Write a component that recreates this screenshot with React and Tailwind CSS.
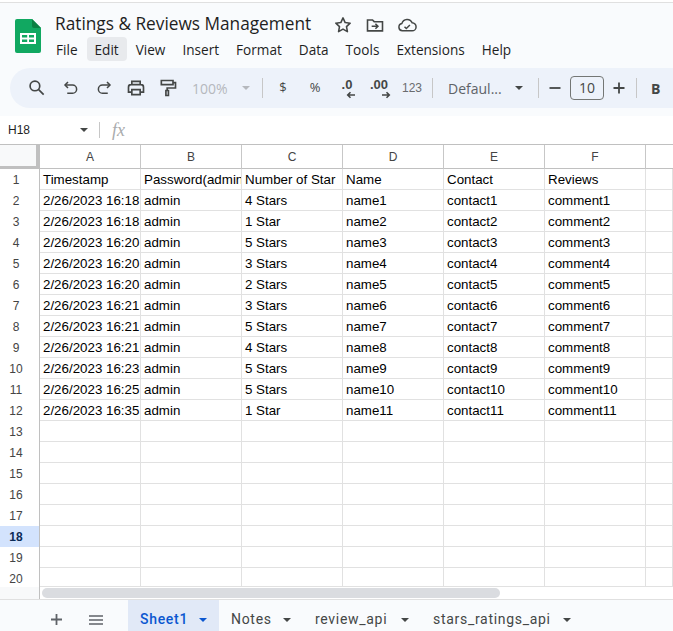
import React from "react";

const ROWS = [
  ["Timestamp", "Password(admin", "Number of Star", "Name", "Contact", "Reviews"],
  ["2/26/2023 16:18", "admin", "4 Stars", "name1", "contact1", "comment1"],
  ["2/26/2023 16:18", "admin", "1 Star", "name2", "contact2", "comment2"],
  ["2/26/2023 16:20", "admin", "5 Stars", "name3", "contact3", "comment3"],
  ["2/26/2023 16:20", "admin", "3 Stars", "name4", "contact4", "comment4"],
  ["2/26/2023 16:20", "admin", "2 Stars", "name5", "contact5", "comment5"],
  ["2/26/2023 16:21", "admin", "3 Stars", "name6", "contact6", "comment6"],
  ["2/26/2023 16:21", "admin", "5 Stars", "name7", "contact7", "comment7"],
  ["2/26/2023 16:21", "admin", "4 Stars", "name8", "contact8", "comment8"],
  ["2/26/2023 16:23", "admin", "5 Stars", "name9", "contact9", "comment9"],
  ["2/26/2023 16:25", "admin", "5 Stars", "name10", "contact10", "comment10"],
  ["2/26/2023 16:35", "admin", "1 Star", "name11", "contact11", "comment11"],
];

const Icon = ({ children, size = 20, view = 24, cls = "text-[#444746]" }) => (
  <svg width={size} height={size} viewBox={`0 0 ${view} ${view}`} fill="none" stroke="currentColor" strokeWidth="2" className={cls}>
    {children}
  </svg>
);

const Caret = ({ cls = "border-t-[#444746]" }) => (
  <span className={`inline-block w-0 h-0 border-l-[4.5px] border-r-[4.5px] border-t-[4.5px] border-l-transparent border-r-transparent ${cls}`} />
);

const Divider = () => <div className="w-px h-[20px] bg-[#c7c7c7]" />;

const Logo = () => (
  <svg width="26" height="34" viewBox="0 0 26 34">
    <path d="M2 0H17L26 9V32a2 2 0 0 1-2 2H2a2 2 0 0 1-2-2V2a2 2 0 0 1 2-2z" fill="#11a861" />
    <path d="M17 0L26 9H19a2 2 0 0 1-2-2z" fill="#0b8043" />
    <path d="M5 14H21V25H5z" fill="#fff" />
    <path d="M7 16H12.2V18.5H7zM14 16H19V18.5H14zM7 20.5H12.2V23H7zM14 20.5H19V23H14z" fill="#11a861" />
  </svg>
);

const MENU = [
  ["File", "ml-[48px]"],
  ["Edit", "bg-[#e8eaed] rounded-[4px]"],
  ["View", ""],
  ["Insert", ""],
  ["Format", ""],
  ["Data", ""],
  ["Tools", ""],
  ["Extensions", ""],
  ["Help", ""],
];

const TABS = [
  ["Sheet1", true, "w-[91px]"],
  ["Notes", false, "w-[84px]"],
  ["review_api", false, "w-[118px]"],
  ["stars_ratings_api", false, "w-[162px]"],
];

function Cell({ children }) {
  return (
    <div className="h-full border-r border-[#e1e1e1] pl-[3px] overflow-hidden whitespace-nowrap text-[13.33px] leading-[22px] text-black">
      {children}
    </div>
  );
}

function Row({ n, data, short }) {
  const active = n === 18;
  return (
    <div className={`grid grid-cols-[40px_repeat(6,101px)_27px] border-b border-[#e1e1e1] ${short ? "h-[19px]" : "h-[21px]"}`}>
      <div className={`h-full border-r border-[#c0c0c0] pr-[7px] text-center text-[12px] leading-[22px] ${active ? "bg-[#d3e3fd] font-bold text-[#0b2a55]" : "bg-white text-[#444]"}`}>
        {n}
      </div>
      {[0, 1, 2, 3, 4, 5, 6].map((i) => (
        <Cell key={i}>{data ? data[i] : null}</Cell>
      ))}
    </div>
  );
}

export default function App() {
  const rows = [];
  for (let n = 1; n <= 20; n++) rows.push(<Row key={n} n={n} data={ROWS[n - 1]} short={n === 20} />);
  return (
    <div className="w-[673px] h-[631px] overflow-hidden bg-white font-['Liberation_Sans',sans-serif] flex flex-col">
      <div className="h-[3px] shrink-0 border-b border-[#e0e0e0] bg-white" />
      <div className="h-[113px] shrink-0 bg-[#f9fbfd] flex flex-col font-['Open_Sans',sans-serif]">
        <div className="h-[65px] shrink-0 flex relative">
          <div className="ml-[15px] mt-[16px]"><Logo /></div>
          <div className="flex-1 flex flex-col">
            <div className="h-[34px] flex items-center">
              <span className="ml-[14px] text-[17.25px] leading-[22px] text-[#1f1f1f] w-[278px] whitespace-nowrap mt-[8px]">Ratings &amp; Reviews Management</span>
              <div className="flex items-center mt-[9px] gap-[12px]">
                <Icon size={20}><path strokeWidth="1.9" strokeLinejoin="round" d="M12 3.500l2.600 5.600 6 .7-4.400 4.200 1.100 6-5.300-3-5.300 3 1.100-6-4.400-4.200 6-.7z" /></Icon>
                <Icon size={20}><path strokeWidth="1.9" d="M3 6h6l2 2h10v11H3z" /><path strokeWidth="1.9" d="M8 13.500h7M12.500 10.500l3 3-3 3" /></Icon>
                <Icon size={20}><path strokeWidth="1.8" d="M6.500 19a4.500 4.500 0 0 1-.6-8.900A6.500 6.500 0 0 1 18.200 9.400 4.800 4.800 0 0 1 18 19z" /><path strokeWidth="1.8" d="M9 14l2.200 2.200L15.500 12" /></Icon>
              </div>
            </div>
            <div className="absolute left-0 top-[34px] flex h-[24px] items-center gap-[1px] text-[13.6px] text-[#1f1f1f] whitespace-nowrap">
              {MENU.map(([m, c]) => (
                <div key={m} className={`h-[24px] px-[8px] leading-[26px] ${c}`}>{m}</div>
              ))}
            </div>
          </div>
        </div>
        <div className="ml-[10px] h-[40px] shrink-0 bg-[#edf2fa] rounded-l-[20px] flex items-center">
          <div className="w-[11px]" />
          <div className="w-[32px] flex justify-center"><Icon size={20}><circle cx="9.500" cy="9.500" r="5.800" /><path d="M14 14l6 6" /></Icon></div>
          <div className="w-[34px] flex justify-center ml-[1px]"><Icon size={18}><path d="M8 4L4 8l4 4" /><path d="M4 8h10a5 5 0 0 1 0 11H7" /></Icon></div>
          <div className="w-[32px] flex justify-center"><Icon size={18}><path d="M16 4l4 4-4 4" /><path d="M20 8H10a5 5 0 0 0 0 11h7" /></Icon></div>
          <div className="w-[32px] flex justify-center"><Icon size={20}><path d="M7 8V4h10v4M7 17H3v-6a3 3 0 0 1 3-3h12a3 3 0 0 1 3 3v6h-4" /><path d="M7 14h10v6H7z" /></Icon></div>
          <div className="w-[31px] flex justify-center"><Icon size={20}><path d="M4 3h14v5H4zM18 5.500h3V12H11v3" /><path d="M9.500 15h3v6h-3z" /></Icon></div>
          <div className="w-[9px]" />
          <span className="w-[50px] text-[14px] text-[#b5b8bd]">100%</span>
          <Caret cls="border-t-[#b5b8bd]" />
          <div className="w-[12px]" />
          <Divider />
          <div className="w-[4px]" />
          <div className="w-[32px] text-center text-[13px] text-[#444746]">$</div>
          <div className="w-[32px] text-center text-[13px] text-[#444746]">%</div>
          <div className="w-[32px] h-[24px] relative flex justify-center text-[#444746]">
            <span className="text-[13px] leading-[17px] font-semibold font-['Liberation_Sans',sans-serif]">.0</span>
            <svg width="10" height="8" viewBox="0 0 10 8" className="absolute left-[15px] top-[15px]" fill="none" stroke="currentColor" strokeWidth="1.600"><path d="M9 4H2M4.500 1.200L1.700 4l2.800 2.800" /></svg>
          </div>
          <div className="w-[32px] h-[24px] relative flex justify-center text-[#444746]">
            <span className="text-[13px] leading-[17px] font-semibold font-['Liberation_Sans',sans-serif]">.00</span>
            <svg width="10" height="8" viewBox="0 0 10 8" className="absolute left-[18px] top-[15px]" fill="none" stroke="currentColor" strokeWidth="1.600"><path d="M1 4h7M5.500 1.200L8.300 4 5.500 6.800" /></svg>
          </div>
          <div className="w-[34px] text-center text-[12px] text-[#6a6c6e] font-['Liberation_Sans',sans-serif]">123</div>
          <div className="w-[3px]" />
          <Divider />
          <div className="w-[15px]" />
          <span className="w-[67px] text-[14px] text-[#5f6368] whitespace-nowrap">Defaul...</span>
          <Caret />
          <div className="w-[15px]" />
          <Divider />
          <div className="w-[9px]" />
          <svg width="14" height="14" viewBox="0 0 14 14" className="text-[#444746]" stroke="currentColor" strokeWidth="1.800"><path d="M1.500 7h11" /></svg>
          <div className="w-[8px]" />
          <div className="w-[34px] h-[24px] border border-[#747775] rounded-[4px] text-center text-[14px] leading-[22px] text-[#444746]">10</div>
          <div className="w-[8px]" />
          <svg width="14" height="14" viewBox="0 0 14 14" className="text-[#444746]" stroke="currentColor" strokeWidth="1.800"><path d="M1.500 7h11M7 1.500v11" /></svg>
          <div className="w-[10px]" />
          <Divider />
          <div className="w-[14px]" />
          <span className="text-[14px] font-bold text-[#444746]">B</span>
        </div>
      </div>

      <div className="h-[28px] shrink-0 bg-white flex items-center">
        <span className="ml-[8px] w-[72px] text-[12px] text-[#1f1f1f]">H18</span>
        <Caret />
        <div className="w-[11px]" />
        <div className="w-px h-[16px] bg-[#c7c7c7]" />
        <span className="ml-[12px] text-[18px] leading-[18px] italic text-[#a9abad] font-['Liberation_Serif',serif]">fx</span>
      </div>

      <div className="grid grid-cols-[40px_repeat(6,101px)_27px] h-[25px] shrink-0 border-t border-b border-[#c0c0c0] bg-white text-[12px] text-[#444]">
        <div className="h-full bg-[#f8f9fa] border-r-[4px] border-b-[4px] border-[#c0c0c0]" />
        {["A", "B", "C", "D", "E", "F", ""].map((c, i) => (
          <div key={i} className={`h-full text-center leading-[25px] ${i < 6 ? "border-r border-[#c7c7c7]" : ""}`}>{c}</div>
        ))}
      </div>

      <div className="shrink-0 bg-white">{rows}</div>

      <div className="h-[12px] shrink-0 flex bg-white border-b-0">
        <div className="w-[40px] bg-[#f8f9fa] border-r border-[#c0c0c0]" />
        <div className="flex-1 pl-[2px] pt-[1px]">
          <div className="w-[458px] h-[10px] rounded-[5px] bg-[#dadce0]" />
        </div>
      </div>

      <div className="flex-1 border-t border-[#e0e0e0] bg-[#f9fbfd] flex items-stretch font-['Roboto',sans-serif] text-[14px] tracking-[0.7px] text-[#444746]">
        <div className="w-[128px] flex items-center pt-[8px]">
          <svg width="11" height="11" viewBox="0 0 11 11" className="ml-[51px] text-[#5f6368]" stroke="currentColor" strokeWidth="1.800"><path d="M0 5.500h11M5.500 0v11" /></svg>
          <svg width="14" height="10" viewBox="0 0 14 10" className="ml-[27px] text-[#5f6368]" stroke="currentColor" strokeWidth="1.400"><path d="M0 1h14M0 5h14M0 9h14" /></svg>
        </div>
        {TABS.map(([name, active, w]) => (
          <div key={name} className={`${w} pl-[12px] pt-[8px] flex items-center justify-between pr-[12.5px] ${active ? "bg-[#e1e9f7] text-[#0b57d0] font-medium" : ""}`}>
            <span>{name}</span>
            <Caret cls={active ? "border-t-[#0b57d0]" : "border-t-[#444746]"} />
          </div>
        ))}
      </div>
    </div>
  );
}
